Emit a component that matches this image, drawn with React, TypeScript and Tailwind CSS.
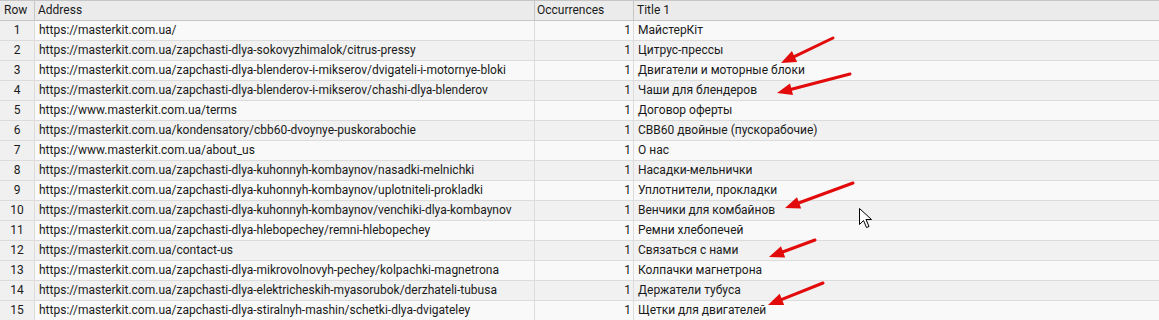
import React from "react";

const rows: [string, string][] = [
  ["https://masterkit.com.ua/", "МайстерКіт"],
  ["https://masterkit.com.ua/zapchasti-dlya-sokovyzhimalok/citrus-pressy", "Цитрус-прессы"],
  ["https://masterkit.com.ua/zapchasti-dlya-blenderov-i-mikserov/dvigateli-i-motornye-bloki", "Двигатели и моторные блоки"],
  ["https://masterkit.com.ua/zapchasti-dlya-blenderov-i-mikserov/chashi-dlya-blenderov", "Чаши для блендеров"],
  ["https://www.masterkit.com.ua/terms", "Договор оферты"],
  ["https://masterkit.com.ua/kondensatory/cbb60-dvoynye-puskorabochie", "CBB60 двойные (пускорабочие)"],
  ["https://www.masterkit.com.ua/about_us", "О нас"],
  ["https://masterkit.com.ua/zapchasti-dlya-kuhonnyh-kombaynov/nasadki-melnichki", "Насадки-мельнички"],
  ["https://masterkit.com.ua/zapchasti-dlya-kuhonnyh-kombaynov/uplotniteli-prokladki", "Уплотнители, прокладки"],
  ["https://masterkit.com.ua/zapchasti-dlya-kuhonnyh-kombaynov/venchiki-dlya-kombaynov", "Венчики для комбайнов"],
  ["https://masterkit.com.ua/zapchasti-dlya-hlebopechey/remni-hlebopechey", "Ремни хлебопечей"],
  ["https://masterkit.com.ua/contact-us", "Связаться с нами"],
  ["https://masterkit.com.ua/zapchasti-dlya-mikrovolnovyh-pechey/kolpachki-magnetrona", "Колпачки магнетрона"],
  ["https://masterkit.com.ua/zapchasti-dlya-elektricheskih-myasorubok/derzhateli-tubusa", "Держатели тубуса"],
  ["https://masterkit.com.ua/zapchasti-dlya-stiralnyh-mashin/schetki-dlya-dvigateley", "Щетки для двигателей"],
];

const arrows: [number, number, number, number][] = [
  [833, 38, 781, 63],
  [850, 74, 777, 93],
  [853, 183, 785, 208],
  [815, 240, 769, 257],
  [823, 283, 768, 305],
];

function Arrow({ x1, y1, x2, y2 }: { x1: number; y1: number; x2: number; y2: number }) {
  const dx = x2 - x1;
  const dy = y2 - y1;
  const len = Math.hypot(dx, dy);
  const ux = dx / len;
  const uy = dy / len;
  const hl = 15;
  const hw = 6;
  const bx = x2 - ux * hl;
  const by = y2 - uy * hl;
  const px = -uy;
  const py = ux;
  return (
    <g>
      <line x1={x1} y1={y1} x2={bx + ux * 2} y2={by + uy * 2} stroke="#e20a0a" strokeWidth={3} strokeLinecap="round" />
      <polygon
        points={`${x2},${y2} ${bx + px * hw},${by + py * hw} ${bx - px * hw},${by - py * hw}`}
        fill="#e20a0a"
      />
    </g>
  );
}

export default function App() {
  return (
    <div className="relative w-[1159px] h-[320px] overflow-hidden bg-[#f9f9f9] text-[12px] text-[#1a1a1a]" style={{ fontFamily: "Roboto, 'Liberation Sans', sans-serif" }}>
      <div className="grid grid-cols-[35px_500px_99px_1fr] border-t border-[#c6c6c6]">
        <div className="h-[20px] bg-[#ebebeb] border-b border-r border-[#c6c6c6] pl-[4px] leading-[19px]">Row</div>
        <div className="h-[20px] bg-[#ebebeb] border-b border-r border-[#c6c6c6] pl-[3px] leading-[19px]">Address</div>
        <div className="h-[20px] bg-[#ebebeb] border-b border-r border-[#c6c6c6] pl-[2px] leading-[19px]">Occurrences</div>
        <div className="h-[20px] bg-[#ebebeb] border-b border-[#c6c6c6] pl-[3px] leading-[19px]">Title 1</div>
        {rows.map(([url, title], i) => {
          const bg = i % 2 === 1 ? "bg-[#f1f1f1]" : "bg-[#f9f9f9]";
          return (
            <React.Fragment key={i}>
              <div className={`h-[20px] border-b border-r border-[#dcdcdc] text-center leading-[19px] bg-[#f0f0f0]`}>{i + 1}</div>
              <div className={`h-[20px] border-b border-r border-[#dcdcdc] pl-[4px] leading-[19px] whitespace-nowrap ${bg}`}>{url}</div>
              <div className={`h-[20px] border-b border-r border-[#dcdcdc] pr-[2px] text-right leading-[19px] ${bg}`}>1</div>
              <div className={`h-[20px] border-b border-[#dcdcdc] pl-[4px] leading-[19px] whitespace-nowrap ${bg}`}>{title}</div>
            </React.Fragment>
          );
        })}
      </div>
      <svg className="absolute left-0 top-0 pointer-events-none" width={1159} height={320}>
        {arrows.map(([a, b, c, d], i) => (
          <Arrow key={i} x1={a} y1={b} x2={c} y2={d} />
        ))}
        <path
          d="M859.5 208.5 L859.5 224.5 L863.5 220.5 L866.5 227.5 L869 226.5 L866 219.5 L871.5 219.5 Z"
          fill="#ffffff"
          stroke="#000000"
          strokeWidth={1}
          strokeLinejoin="miter"
        />
      </svg>
    </div>
  );
}
